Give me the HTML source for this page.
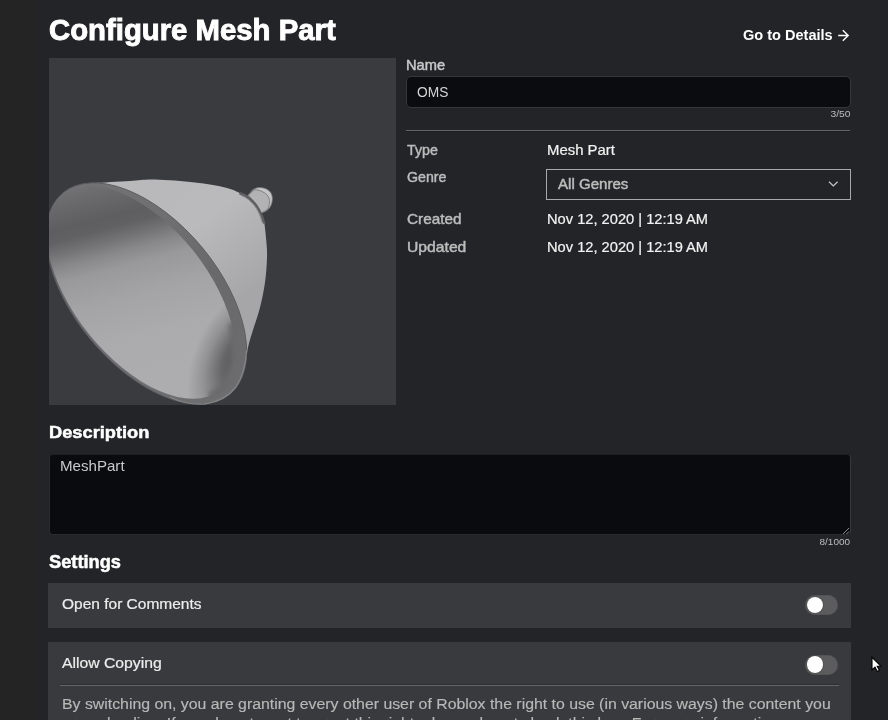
<!DOCTYPE html>
<html><head><meta charset="utf-8">
<style>
html,body{margin:0;padding:0;width:888px;height:720px;overflow:hidden;background:#232427;}
body{position:relative;font-family:"Liberation Sans", sans-serif;}
.t{position:absolute;white-space:pre;}
.abs{position:absolute;}
</style></head><body>
<div class="abs" style="left:0;top:0;width:38px;height:720px;background:#242424;"></div>
<!-- preview -->
<div class="abs" style="left:49px;top:58px;width:347px;height:347px;background:#3a3b3e;overflow:hidden;">
<svg width="347" height="347" viewBox="49 58 347 347" style="position:absolute;left:0;top:0">
<defs>
<linearGradient id="gin" x1="60" y1="188" x2="112" y2="385" gradientUnits="userSpaceOnUse">
<stop offset="0" stop-color="#747476"/>
<stop offset="0.06" stop-color="#6c6c6e"/>
<stop offset="0.2" stop-color="#5e5e60"/>
<stop offset="0.25" stop-color="#616163"/>
<stop offset="0.31" stop-color="#727274"/>
<stop offset="0.38" stop-color="#89898b"/>
<stop offset="0.45" stop-color="#99999b"/>
<stop offset="0.6" stop-color="#a4a4a6"/>
<stop offset="0.8" stop-color="#ababad"/>
<stop offset="1" stop-color="#adadaf"/>
</linearGradient>
<linearGradient id="gout" x1="175" y1="183" x2="255" y2="290" gradientUnits="userSpaceOnUse">
<stop offset="0" stop-color="#b9b9bb"/>
<stop offset="0.35" stop-color="#bababc"/>
<stop offset="1" stop-color="#a6a6a8"/>
</linearGradient>
<linearGradient id="gband" x1="0" y1="185" x2="0" y2="405" gradientUnits="userSpaceOnUse">
<stop offset="0" stop-color="#727274"/>
<stop offset="0.4" stop-color="#69696b"/>
<stop offset="1" stop-color="#6e6e70"/>
</linearGradient>
<filter id="fblur" x="-20%" y="-20%" width="140%" height="140%"><feGaussianBlur stdDeviation="6"/></filter>
<filter id="fblur2" filterUnits="userSpaceOnUse" x="100" y="250" width="200" height="200"><feGaussianBlur stdDeviation="2.2"/></filter>
<radialGradient id="gshadow">
<stop offset="0" stop-color="#555557" stop-opacity="1"/>
<stop offset="0.35" stop-color="#555557" stop-opacity="0.8"/>
<stop offset="0.7" stop-color="#555557" stop-opacity="0.3"/>
<stop offset="1" stop-color="#555557" stop-opacity="0"/>
</radialGradient>
<clipPath id="cin"><path d="M219.41,390.17 A125.4,66.8 51.3 1 0 62.59,194.43 A125.4,66.8 51.3 1 0 219.41,390.17 Z"/></clipPath>
</defs>
<path d="M95.0,183.0 C100.8,182.7 120.0,181.6 130.0,181.0 C140.0,180.4 144.2,179.2 155.0,179.5 C165.8,179.8 183.3,181.2 195.0,182.5 C206.7,183.8 217.2,185.6 225.0,187.5 C232.8,189.4 237.2,191.6 241.7,194.2 C246.2,196.8 248.9,199.9 252.0,203.0 C255.1,206.1 258.0,210.2 260.0,213.0 C262.0,215.8 262.7,215.5 263.8,220.0 C264.8,224.5 265.7,233.8 266.2,240.0 C266.8,246.2 267.2,250.4 267.0,257.5 C266.8,264.6 266.2,274.2 265.0,282.5 C263.8,290.8 262.0,299.6 260.0,307.5 C258.0,315.4 254.9,323.9 253.0,330.0 C251.1,336.1 249.8,340.0 248.8,344.0 C247.8,348.0 247.5,350.7 246.9,354.0 C246.3,357.3 245.7,362.3 245.5,364.0 L146.4,293.5 Z" fill="url(#gout)"/>
<path d="M229.89,394.06 A130.7,72.3 50.3 1 0 62.91,192.94 A130.7,72.3 50.3 1 0 229.89,394.06 Z" fill="url(#gband)" stroke="#5e5e60" stroke-width="1"/>
<path d="M219.41,390.17 A125.4,66.8 51.3 1 0 62.59,194.43 A125.4,66.8 51.3 1 0 219.41,390.17 Z" fill="url(#gin)"/>
<g clip-path="url(#cin)"><ellipse cx="240" cy="360" rx="46" ry="78" transform="rotate(24 240 360)" fill="url(#gshadow)"/></g>
<path d="M231.3,323.2 C234,334 235.5,346 235,356.2 C234.5,364 233,371 227.3,381.4 C222,389 216,393 209.2,395.9" fill="none" stroke="#6a6a6c" stroke-width="7" filter="url(#fblur2)" />
<path d="M246.5,350 C246,364 243,376 236,387 C229,396 218,402 205,404 C192,405 180,402 170,397" fill="none" stroke="#8a8a8c" stroke-width="1.3" stroke-opacity="0.8"/>
<path d="M247.5,196 L252.5,190 C254,188.8 256,188 258.5,187.6 C262,187.2 266,188.2 269.2,190.8 C271.5,192.8 272.6,196 272.4,199.5 C272.2,203.5 270.8,206.8 268.3,209.2 C266.5,211 264.5,212 262.5,212.4 L260.5,212.4 Z" fill="#c4c4c6" stroke="#6e6e70" stroke-width="0.8"/>
<path d="M248.5,195 L254.3,189.8 C257,189.6 260,190.4 262.3,191.6 C264.8,192.9 266.8,194.4 267.8,195.9 C269,197.8 269.7,200 269.6,202 C269.5,204 269.2,205.8 268.4,207.5 C267.6,209 266.3,210.3 264.7,211.2 L261,213 Z" fill="#b2b2b4" stroke="#7a7a7c" stroke-width="0.9"/>
<path d="M239.5,193.2 C250,196.5 259.5,206 264.2,223.5" fill="none" stroke="#5f5f62" stroke-width="2.6"/>
<path d="M241,195.5 C250.5,199 258,207 262,222" fill="none" stroke="#8d8d8f" stroke-width="1"/>
</svg>
</div>
<!-- name input -->
<div class="abs" style="left:406px;top:76px;width:443px;height:30px;background:#0b0c0f;border:1px solid #35373a;border-radius:5px;"></div>
<div class="abs" style="left:406px;top:130px;width:444px;height:1px;background:#656668;"></div><div class="abs" style="left:406px;top:131px;width:444px;height:1px;background:#1c1d20;"></div>
<!-- dropdown -->
<div class="abs" style="left:546px;top:169px;width:303px;height:29px;border:1px solid #a9a9aa;"></div>
<svg class="abs" style="left:826px;top:178px" width="14" height="12" viewBox="0 0 14 12"><path d="M3,3.8 L7.3,8 L11.6,3.8" fill="none" stroke="#c8c8c8" stroke-width="1.2"/></svg>
<!-- go to details arrow -->
<svg class="abs" style="left:830px;top:24px" width="26" height="22" viewBox="830 24 26 22"><path d="M838.2,35.5 L848,35.5 M842.8,30.2 L848.2,35.5 L842.8,40.8" fill="none" stroke="#ffffff" stroke-width="1.4"/></svg>
<!-- textarea -->
<div class="abs" style="left:49px;top:454px;width:800px;height:79px;background:#0a0b0e;border:1px solid #2a2b2e;border-top-color:#1e1f22;border-right-color:#38393c;border-radius:4px;"></div>
<svg class="abs" style="left:840px;top:525.2px" width="10" height="10" viewBox="0 0 10 10"><path d="M3,9 L9,3 M6.5,9 L9,6.5" stroke="#9a9a9a" stroke-width="0.9"/></svg>
<!-- settings rows -->
<div class="abs" style="left:48px;top:583px;width:803px;height:45px;background:#393a3d;"></div>
<div class="abs" style="left:48px;top:642px;width:803px;height:78px;background:#393a3d;"></div>
<div class="abs" style="left:60px;top:684px;width:779px;height:1px;background:#2e2f32;"></div><div class="abs" style="left:60px;top:685px;width:779px;height:1px;background:#636466;"></div>
<!-- toggles -->
<div class="abs" style="left:805px;top:595px;width:33px;height:20px;border-radius:10px;background:#5c5c5e;box-shadow:inset 0 0 0 0.6px #4d4d4f;"></div>
<div class="abs" style="left:806.9px;top:596.8px;width:16.4px;height:16.4px;border-radius:50%;background:#ffffff;box-shadow:0 0 1.2px rgba(0,0,0,0.7);"></div>
<div class="abs" style="left:805px;top:654.5px;width:33px;height:20px;border-radius:10px;background:#5c5c5e;box-shadow:inset 0 0 0 0.6px #4d4d4f;"></div>
<div class="abs" style="left:806.9px;top:656.3px;width:16.4px;height:16.4px;border-radius:50%;background:#ffffff;box-shadow:0 0 1.2px rgba(0,0,0,0.7);"></div>
<div class="t" style="top:15.59px;font-size:28.6px;line-height:28.6px;color:#ffffff;font-weight:700;-webkit-text-stroke:0.9px #ffffff;left:49.00px;transform-origin:left top;transform:scaleX(1.0253);">Configure Mesh Part</div>
<div class="t" style="top:27.78px;font-size:14.2px;line-height:14.2px;color:#ffffff;font-weight:700;left:743.00px;transform-origin:left top;transform:scaleX(1.0250);">Go to Details</div>
<div class="t" style="top:59.13px;font-size:13.9px;line-height:13.9px;color:#c9c9ca;font-weight:400;-webkit-text-stroke:0.45px #c9c9ca;left:405.90px;transform-origin:left top;transform:scaleX(1.0545);">Name</div>
<div class="t" style="top:84.58px;font-size:14.2px;line-height:14.2px;color:#d4d4d5;font-weight:400;left:416.60px;transform-origin:left top;transform:scaleX(0.9698);">OMS</div>
<div class="t" style="top:109.46px;font-size:9.5px;line-height:9.5px;color:#bdbdbe;font-weight:400;right:38.00px;transform-origin:right top;transform:scaleX(1.0830);">3/50</div>
<div class="t" style="top:142.58px;font-size:14.2px;line-height:14.2px;color:#bcbcbd;font-weight:400;-webkit-text-stroke:0.45px #bcbcbd;left:406.80px;transform-origin:left top;transform:scaleX(1.0007);">Type</div>
<div class="t" style="top:142.58px;font-size:14.2px;line-height:14.2px;color:#f2f2f2;font-weight:400;-webkit-text-stroke:0.2px #f2f2f2;left:546.80px;transform-origin:left top;transform:scaleX(1.0504);">Mesh Part</div>
<div class="t" style="top:170.28px;font-size:14.2px;line-height:14.2px;color:#bcbcbd;font-weight:400;-webkit-text-stroke:0.45px #bcbcbd;left:406.80px;transform-origin:left top;transform:scaleX(1.0013);">Genre</div>
<div class="t" style="top:176.98px;font-size:14.2px;line-height:14.2px;color:#bdbdbd;font-weight:400;-webkit-text-stroke:0.45px #bdbdbd;left:557.60px;transform-origin:left top;transform:scaleX(1.0623);">All Genres</div>
<div class="t" style="top:212.18px;font-size:14.2px;line-height:14.2px;color:#bcbcbd;font-weight:400;-webkit-text-stroke:0.45px #bcbcbd;left:406.80px;transform-origin:left top;transform:scaleX(1.0800);">Created</div>
<div class="t" style="top:212.18px;font-size:14.2px;line-height:14.2px;color:#f2f2f2;font-weight:400;-webkit-text-stroke:0.2px #f2f2f2;left:546.80px;transform-origin:left top;transform:scaleX(1.0330);">Nov 12, 2020 | 12:19 AM</div>
<div class="t" style="top:239.78px;font-size:14.2px;line-height:14.2px;color:#bcbcbd;font-weight:400;-webkit-text-stroke:0.45px #bcbcbd;left:406.80px;transform-origin:left top;transform:scaleX(1.1062);">Updated</div>
<div class="t" style="top:239.78px;font-size:14.2px;line-height:14.2px;color:#f2f2f2;font-weight:400;-webkit-text-stroke:0.2px #f2f2f2;left:546.80px;transform-origin:left top;transform:scaleX(1.0330);">Nov 12, 2020 | 12:19 AM</div>
<div class="t" style="top:423.57px;font-size:17.4px;line-height:17.4px;color:#ffffff;font-weight:700;-webkit-text-stroke:0.5px #ffffff;left:49.40px;transform-origin:left top;transform:scaleX(1.0496);">Description</div>
<div class="t" style="top:458.73px;font-size:14.5px;line-height:14.5px;color:#c9c9ca;font-weight:400;left:59.90px;transform-origin:left top;transform:scaleX(1.0406);">MeshPart</div>
<div class="t" style="top:536.76px;font-size:9.5px;line-height:9.5px;color:#bdbdbe;font-weight:400;right:38.30px;transform-origin:right top;transform:scaleX(1.0500);">8/1000</div>
<div class="t" style="top:552.76px;font-size:18px;line-height:18px;color:#ffffff;font-weight:700;-webkit-text-stroke:0.5px #ffffff;left:49.00px;transform-origin:left top;transform:scaleX(1.0141);">Settings</div>
<div class="t" style="top:596.88px;font-size:14.2px;line-height:14.2px;color:#ededed;font-weight:400;-webkit-text-stroke:0.2px #ededed;left:61.70px;transform-origin:left top;transform:scaleX(1.0922);">Open for Comments</div>
<div class="t" style="top:655.98px;font-size:14.2px;line-height:14.2px;color:#ededed;font-weight:400;-webkit-text-stroke:0.2px #ededed;left:61.70px;transform-origin:left top;transform:scaleX(1.1090);">Allow Copying</div>
<div class="t" style="top:697.15px;font-size:14px;line-height:14px;color:#b8b8b8;font-weight:400;-webkit-text-stroke:0.15px #b8b8b8;left:62.00px;transform-origin:left top;transform:scaleX(1.1315);">By switching on, you are granting every other user of Roblox the right to use (in various ways) the content you</div>
<div class="t" style="top:715.85px;font-size:14px;line-height:14px;color:#b8b8b8;font-weight:400;-webkit-text-stroke:0.15px #b8b8b8;left:62.00px;transform-origin:left top;transform:scaleX(1.1315);">are uploading. If you do not want to grant this right, please do not check this box. For more information</div>

<!-- cursor -->
<svg class="abs" style="left:866px;top:652px" width="22" height="24" viewBox="866 652 22 24"><path d="M872,657.3 L872,670 L875,667.2 L877.3,671.6 L879.4,670.6 L877.2,666.3 L880.9,666 Z" fill="#ffffff" stroke="#000000" stroke-width="1.1" stroke-linejoin="miter"/></svg>
</body></html>
